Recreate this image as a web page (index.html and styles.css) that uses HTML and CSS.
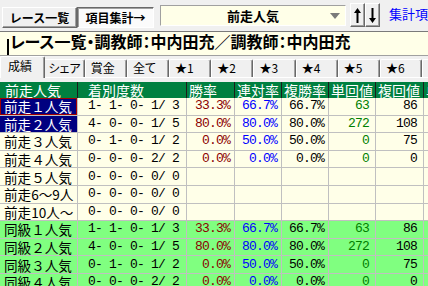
FILE: index.html
```
<!DOCTYPE html>
<html lang="ja">
<head>
<meta charset="utf-8">
<link rel="stylesheet" href="styles.css">
</head>
<body>
<div class="toolbar">
  <button class="btn">レース一覧</button>
  <button class="btn btn-on">項目集計→</button>
  <div class="combo">
    <span class="combo-text">前走人気</span>
    <span class="combo-arrow"><svg width="10" height="6" viewBox="0 0 10 6"><path d="M0 0H10L5 6Z" fill="#7a7a7a"/></svg></span>
  </div>
  <div class="updown">
    <button class="ud"><svg width="7" height="15" viewBox="0 0 7 15"><path d="M3.5 0L7 5H4.5V15H2.5V5H0Z" fill="#000"/></svg></button>
    <button class="ud"><svg width="7" height="15" viewBox="0 0 7 15"><path d="M3.5 15L7 10H4.5V0H2.5V10H0Z" fill="#000"/></svg></button>
  </div>
  <span class="link">集計項目</span>
</div>
<div class="title"><span class="caret"></span><span class="title-text">レース一覧・調教師：中内田充／調教師：中内田充</span></div>
<div class="tabs">
  <div class="tab tab-on">成績</div>
  <div class="tab">シェア</div>
  <div class="tab">賞金</div>
  <div class="tab">全て</div>
  <div class="tab">★1</div>
  <div class="tab">★2</div>
  <div class="tab">★3</div>
  <div class="tab">★4</div>
  <div class="tab">★5</div>
  <div class="tab">★6</div>
  <div class="tab">★7</div>
</div>
<div class="panel">
<table class="grid">
  <colgroup>
    <col class="c1"><col class="c2"><col class="c3"><col class="c4"><col class="c5"><col class="c6"><col class="c7"><col class="c8">
  </colgroup>
  <thead>
    <tr><th>前走人気</th><th class="th-cnt">着別度数</th><th>勝率</th><th>連対率</th><th>複勝率</th><th>単回値</th><th>複回値</th><th>単勝配当</th></tr>
  </thead>
  <tbody>
    <tr class="ry"><td class="name sel focus">前走１人気</td><td class="cnt">1- 1- 0- 1/ 3</td><td class="num r">33.3%</td><td class="num b">66.7%</td><td class="num">66.7%</td><td class="val gr">63</td><td class="val">86</td><td></td></tr>
    <tr class="ry"><td class="name sel">前走２人気</td><td class="cnt">4- 0- 0- 1/ 5</td><td class="num r">80.0%</td><td class="num b">80.0%</td><td class="num">80.0%</td><td class="val gr">272</td><td class="val">108</td><td></td></tr>
    <tr class="ry"><td class="name">前走３人気</td><td class="cnt">0- 1- 0- 1/ 2</td><td class="num r">0.0%</td><td class="num b">50.0%</td><td class="num">50.0%</td><td class="val gr">0</td><td class="val">75</td><td></td></tr>
    <tr class="ry"><td class="name">前走４人気</td><td class="cnt">0- 0- 0- 2/ 2</td><td class="num r">0.0%</td><td class="num b">0.0%</td><td class="num">0.0%</td><td class="val gr">0</td><td class="val">0</td><td></td></tr>
    <tr class="ry"><td class="name">前走５人気</td><td class="cnt">0- 0- 0- 0/ 0</td><td></td><td></td><td></td><td></td><td></td><td></td></tr>
    <tr class="ry"><td class="name">前走6〜9人</td><td class="cnt">0- 0- 0- 0/ 0</td><td></td><td></td><td></td><td></td><td></td><td></td></tr>
    <tr class="ry"><td class="name">前走10人〜</td><td class="cnt">0- 0- 0- 0/ 0</td><td></td><td></td><td></td><td></td><td></td><td></td></tr>
    <tr class="rg"><td class="name">同級１人気</td><td class="cnt">1- 1- 0- 1/ 3</td><td class="num r">33.3%</td><td class="num b">66.7%</td><td class="num">66.7%</td><td class="val gr">63</td><td class="val">86</td><td></td></tr>
    <tr class="rg"><td class="name">同級２人気</td><td class="cnt">4- 0- 0- 1/ 5</td><td class="num r">80.0%</td><td class="num b">80.0%</td><td class="num">80.0%</td><td class="val gr">272</td><td class="val">108</td><td></td></tr>
    <tr class="rg"><td class="name">同級３人気</td><td class="cnt">0- 1- 0- 1/ 2</td><td class="num r">0.0%</td><td class="num b">50.0%</td><td class="num">50.0%</td><td class="val gr">0</td><td class="val">75</td><td></td></tr>
    <tr class="rg"><td class="name">同級４人気</td><td class="cnt">0- 0- 0- 2/ 2</td><td class="num r">0.0%</td><td class="num b">0.0%</td><td class="num">0.0%</td><td class="val gr">0</td><td class="val">0</td><td></td></tr>
  </tbody>
</table>
</div>
</body>
</html>
```
FILE: styles.css
```
html, body {
  margin: 0;
  padding: 0;
}
body {
  width: 428px;
  height: 286px;
  overflow: hidden;
  background: #f0f0f0;
  font-family: "Noto Sans CJK JP", sans-serif;
  color: #000;
}

/* toolbar */
.toolbar {
  display: flex;
  align-items: flex-start;
  height: 31px;
  padding-left: 2px;
}
.btn {
  flex: 0 0 75px;
  box-sizing: border-box;
  height: 21px;
  margin: 7px 0 0 0;
  padding: 0;
  background: #f0f0f0;
  border: 1px solid;
  border-color: #fff #696969 #696969 #fff;
  box-shadow: inset -1px -1px 0 #a0a0a0;
  font-family: "Noto Sans CJK JP", sans-serif;
  font-weight: 700;
  font-size: 12px;
  line-height: 18px;
  color: #000;
  text-align: center;
  white-space: nowrap;
}
.btn-on {
  flex-basis: 77px;
  border-color: #696969 #fff #fff #696969;
  box-shadow: inset 1px 1px 0 #a0a0a0;
  background: #fbfbfb;
}
.combo {
  flex: 0 0 186px;
  box-sizing: border-box;
  display: flex;
  align-items: center;
  height: 21px;
  margin: 5px 0 0 6px;
  background: #ffffe8;
  border: 1px solid;
  border-color: #a0a0a0 #fff #fff #a0a0a0;
}
.combo-text {
  flex: 1;
  padding-left: 20px;
  text-align: center;
  font-weight: 700;
  font-size: 13px;
  line-height: 18px;
}
.combo-arrow {
  flex: 0 0 20px;
  display: flex;
  justify-content: center;
  align-items: center;
}
.updown {
  display: flex;
  flex: 0 0 auto;
  margin: 3px 0 0 4px;
}
.ud {
  box-sizing: border-box;
  width: 15px;
  height: 24px;
  padding: 0;
  margin: 0;
  display: flex;
  align-items: center;
  justify-content: center;
  background: #f0f0f0;
  border: 1px solid;
  border-color: #fff #696969 #696969 #fff;
  box-shadow: inset -1px -1px 0 #a0a0a0;
}
.link {
  flex: 0 0 auto;
  margin: 6px 0 0 9px;
  font-size: 13px;
  line-height: 16px;
  color: #0000ff;
  white-space: nowrap;
}

/* title */
.title {
  box-sizing: border-box;
  display: flex;
  align-items: center;
  height: 25px;
  padding-left: 7px;
  padding-bottom: 5px;
  background: #ffffe8;
  border-top: 1px solid #7a7a7a;
  border-bottom: 1px solid #a0a0a0;
}
.caret {
  align-self: flex-end;
  flex: 0 0 2px;
  height: 16px;
  margin-bottom: -5px;
  background: #000;
  margin-right: 1px;
}
.title-text {
  font-weight: 700;
  font-size: 16px;
  line-height: 20px;
  font-feature-settings: "palt";
  white-space: nowrap;
}

/* tabs */
.tabs {
  display: flex;
  align-items: flex-end;
  height: 21px;
}
.tab {
  flex: 0 0 42.2px;
  box-sizing: border-box;
  height: 18px;
  padding-left: 5px;
  background: #f0f0f0;
  border-top: 1px solid #fff;
  border-left: 1px solid #fff;
  border-right: 1px solid #696969;
  box-shadow: inset -1px 0 0 #a0a0a0;
  border-radius: 2px 2px 0 0;
  font-size: 12px;
  line-height: 16px;
  font-feature-settings: "palt";
  white-space: nowrap;
  overflow: hidden;
}
.tab-on {
  flex-basis: 44.5px;
  height: 22px;
  margin-right: -2px;
  margin-bottom: -1px;
  padding-left: 7px;
  line-height: 17px;
  position: relative;
  z-index: 1;
}

/* panel & grid */
.panel {
  border-top: 1px solid #fff;
  padding-top: 4px;
}
.grid {
  table-layout: fixed;
  border-collapse: separate;
  border-spacing: 0;
  width: 484px;
}
.c1 { width: 78px; }
.c2 { width: 109px; }
.c3 { width: 48px; }
.c4 { width: 47px; }
.c5 { width: 47px; }
.c6 { width: 47px; }
.c7 { width: 48px; }
.c8 { width: 60px; }

.grid thead tr { height: 16px; }
.grid th {
  padding: 0 0 0 2px;
  background: #008040;
  color: #fff;
  font-weight: 400;
  font-size: 14px;
  line-height: 16px;
  text-align: left;
  border-right: 1px solid #1c1c1c;
  white-space: nowrap;
}
.grid th:first-child { padding-left: 5px; }
.grid th.th-cnt { padding-left: 10px; }

.grid tbody tr { height: 17.6px; }
.grid td {
  padding: 0;
  border-right: 1px solid #c0c0c0;
  border-bottom: 1px solid #c0c0c0;
  font-size: 14px;
  line-height: 16px;
  white-space: nowrap;
}
.ry td { background: #ffffe8; }
.rg td { background: #80ff80; }

.grid td.name {
  padding-left: 4px;
  font-size: 13.6px;
}
.grid td.sel {
  background: #000080;
  color: #fff;
}
.grid td.focus { box-shadow: inset 0 0 0 1px #a00000; }

.grid td.cnt,
.grid td.num,
.grid td.val {
  font-family: "Liberation Mono", monospace;
  font-size: 13px;
  letter-spacing: -0.8px;
}
.grid td.cnt { padding-left: 10px; white-space: pre; }
.grid td.num { text-align: right; padding-right: 4px; }
.grid td.val { text-align: right; padding-right: 6px; }

.r { color: #8b0000; }
.b { color: #0000ff; }
.gr { color: #008000; }
```
